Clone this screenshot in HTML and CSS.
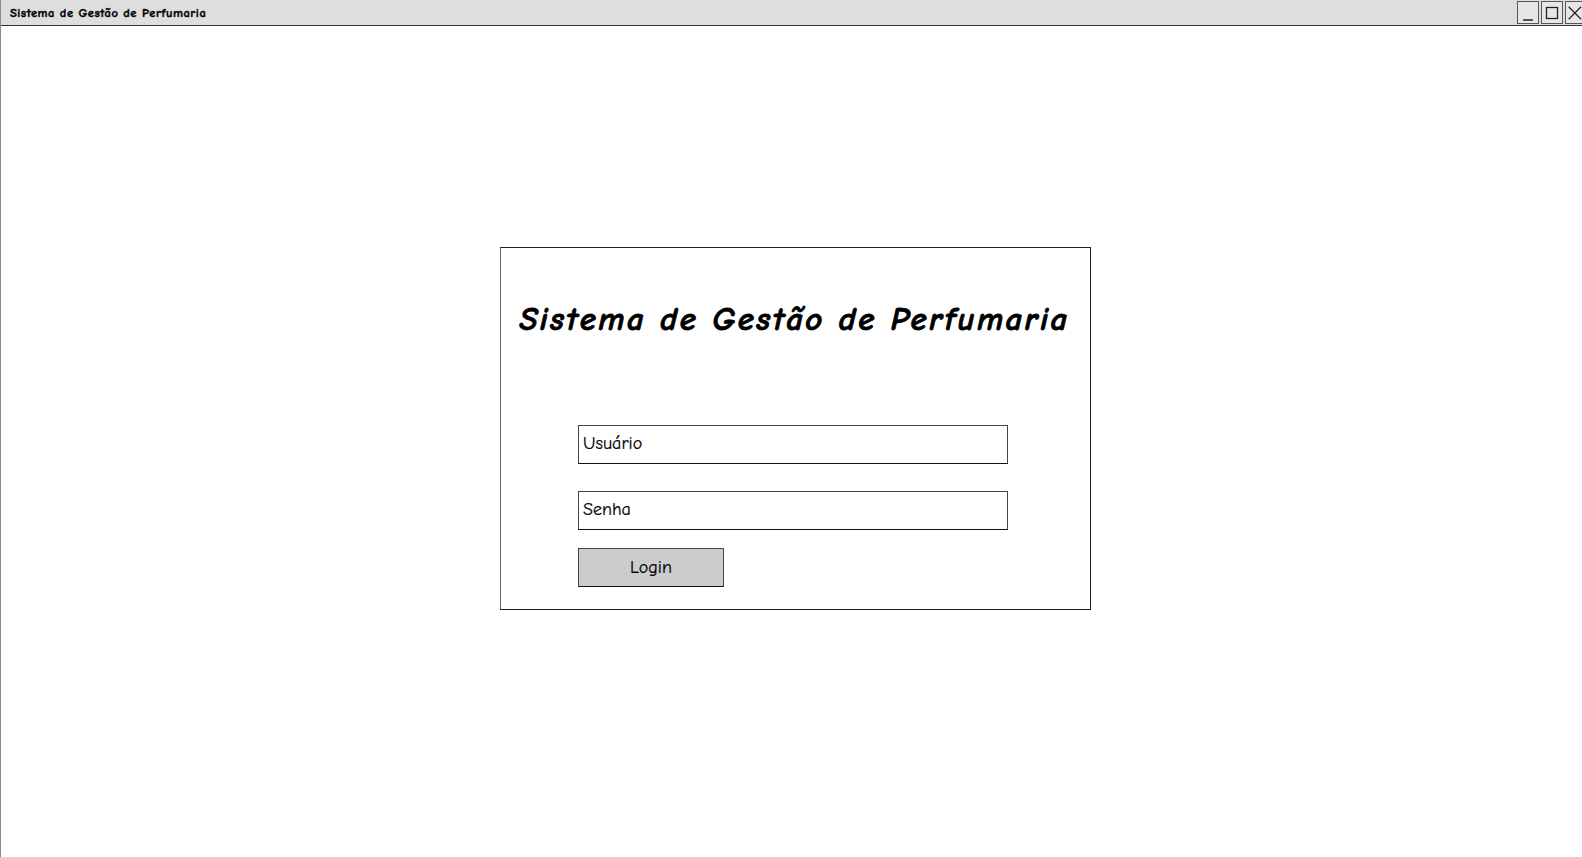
FILE: index.html
```html
<!DOCTYPE html>
<html lang="pt">
<head>
<meta charset="utf-8">
<title>Sistema de Gestão de Perfumaria</title>
<link rel="stylesheet" href="styles.css">
</head>
<body>
<div class="window">
  <div class="titlebar">
    <span class="titlebar-text">Sistema de Gestão de Perfumaria</span>
    <div class="controls">
      <span class="ctl"><svg width="20" height="20" viewBox="0 0 20 20"><line x1="5" y1="17" x2="15" y2="17" stroke="#222" stroke-width="1.5"/></svg></span>
      <span class="ctl"><svg width="20" height="20" viewBox="0 0 20 20"><rect x="4.5" y="4.5" width="11" height="11" fill="none" stroke="#222" stroke-width="1.3"/></svg></span>
      <span class="ctl ctl-last"><svg width="18" height="20" viewBox="0 0 18 20"><path d="M3 3 L17 17 M17 3 L3 17" stroke="#222" stroke-width="1.3"/></svg></span>
    </div>
  </div>
  <div class="content">
    <div class="card">
      <h1 class="card-title">Sistema de Gestão de Perfumaria</h1>
      <div class="form">
        <div class="field">Usuário</div>
        <div class="field">Senha</div>
        <div class="button">Login</div>
      </div>
    </div>
  </div>
</div>
</body>
</html>
```
FILE: styles.css
```css
html, body {
  margin: 0;
  padding: 0;
  background: #fff;
}
body {
  font-family: "Comic Sans MS", "Comic Neue", "DejaVu Sans", sans-serif;
  color: #000;
}
.window {
  width: 1582px;
  height: 857px;
  box-sizing: border-box;
  border-left: 1px solid #8a8a8a;
  overflow: hidden;
}
.titlebar {
  height: 26px;
  background: #dedede;
  border-bottom: 1.5px solid #333;
  display: flex;
  align-items: center;
  justify-content: space-between;
  box-sizing: border-box;
}
.titlebar-text {
  font-size: 12.5px;
  font-weight: bold;
  margin-left: 9px;
  letter-spacing: 0.5px;
  -webkit-text-stroke: 0.4px #000;
}
.controls {
  display: flex;
  gap: 2px;
  align-self: flex-start;
  margin-top: 1px;
}
.ctl {
  width: 22px;
  height: 23px;
  box-sizing: border-box;
  border: 1px solid #555;
  background: #e6e6e6;
  display: flex;
  align-items: center;
  justify-content: center;
}
.ctl-last {
  width: 17px;
  border-right: none;
}
.content {
  padding-top: 221px;
  padding-left: 499px;
}
.card {
  width: 591px;
  height: 363px;
  box-sizing: border-box;
  border: 1.3px solid #222;
  border-left-color: #666;
  display: flex;
  flex-direction: column;
}
.card-title {
  margin: 51px 0 0 0;
  text-align: center;
  font-size: 33px;
  font-weight: bold;
  font-style: italic;
  line-height: 40px;
  letter-spacing: 2.3px;
  padding-right: 2px;
  -webkit-text-stroke: 0.8px #000;
  white-space: nowrap;
}
.form {
  margin-top: 86px;
  margin-left: 77px;
  display: flex;
  flex-direction: column;
  align-items: flex-start;
}
.field {
  width: 430px;
  height: 39px;
  box-sizing: border-box;
  border: 1.3px solid #444;
  border-bottom-color: #111;
  font-size: 18px;
  line-height: 36px;
  padding-left: 4px;
  margin-bottom: 27px;
  -webkit-text-stroke: 0.2px #000;
}
.field + .field {
  margin-bottom: 18px;
}
.button {
  width: 146px;
  height: 39px;
  box-sizing: border-box;
  border: 1.3px solid #444;
  border-bottom-color: #111;
  background: #cccccc;
  font-size: 18px;
  line-height: 38px;
  text-align: center;
  -webkit-text-stroke: 0.2px #000;
}
```
